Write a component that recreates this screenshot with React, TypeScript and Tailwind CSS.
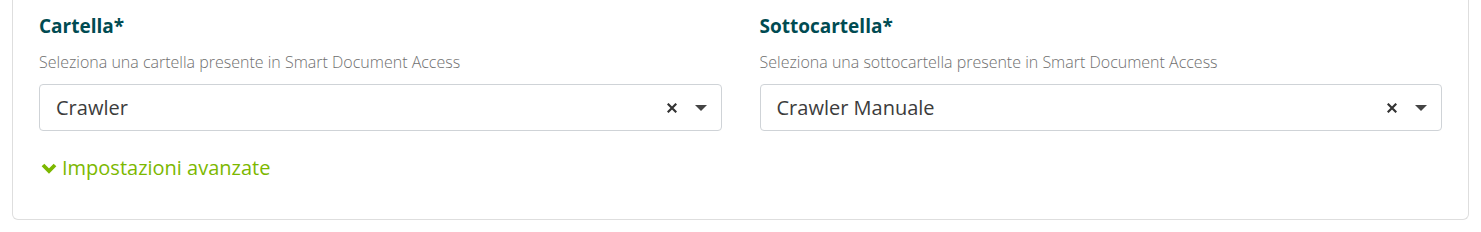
const font = { fontFamily: '"Open Sans", "Noto Sans", sans-serif' };

interface FieldProps {
  label: string;
  hint: string;
  value: string;
}

function SelectField({ label, hint, value }: FieldProps) {
  return (
    <div className="flex flex-col">
      <h3 className="text-[19px] leading-6 font-bold text-[#004b52]">{label}</h3>
      <p className="mt-[14px] text-[16px] leading-5 font-light text-[#6f6f6f]">{hint}</p>
      <div className="mt-3 flex h-[47px] items-center rounded-[4px] border border-[#cfd3d7] bg-white pl-4 pr-[14px]">
        <span className="flex-1 text-[20px] text-[#3c3c3c]">{value}</span>
        <svg width="10" height="10" viewBox="0 0 10 10" className="mr-[18px]">
          <path d="M1.5 1.5 L8.5 8.5 M8.5 1.5 L1.5 8.5" stroke="#333" strokeWidth="2.2" strokeLinecap="square" />
        </svg>
        <svg width="12" height="6" viewBox="0 0 12 6">
          <path d="M0 0 H12 L6 6 Z" fill="#444" />
        </svg>
      </div>
    </div>
  );
}

export default function App() {
  return (
    <div className="min-h-[232px] bg-white" style={font}>
      <div className="mx-3 rounded-b-md border-x border-b border-[#dedede] px-[26px] pt-[14px] pb-[39px]">
        <div className="grid grid-cols-2 gap-[38px]">
          <SelectField
            label="Cartella*"
            hint="Seleziona una cartella presente in Smart Document Access"
            value="Crawler"
          />
          <SelectField
            label="Sottocartella*"
            hint="Seleziona una sottocartella presente in Smart Document Access"
            value="Crawler Manuale"
          />
        </div>
        <button className="mt-[25px] flex items-center gap-[5px] text-[20px] leading-6 text-[#7cb800]">
          <svg width="16" height="11" viewBox="0 0 16 11" className="ml-[2px]">
            <path d="M2 2 L8 8 L14 2" stroke="#7cb800" strokeWidth="3.8" fill="none" />
          </svg>
          Impostazioni avanzate
        </button>
      </div>
    </div>
  );
}
